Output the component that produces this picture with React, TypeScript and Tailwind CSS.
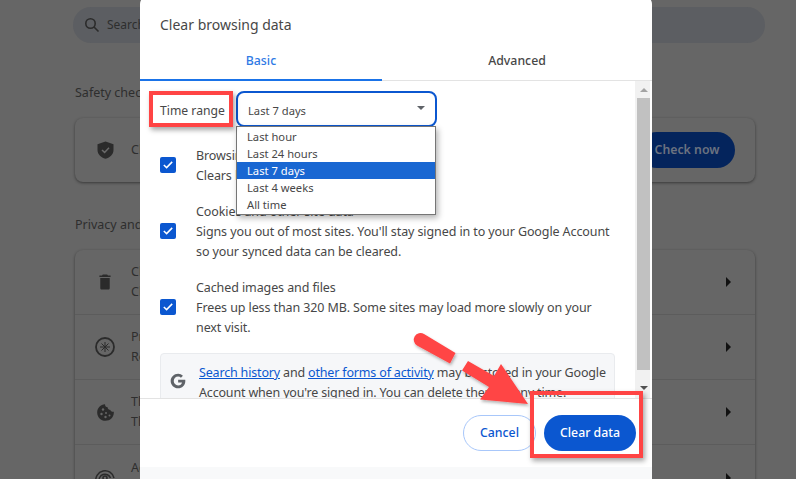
import React from "react";

const font = { fontFamily: '"Noto Sans", "Open Sans", sans-serif' };

function Shield() {
  return (
    <svg width="17" height="18" viewBox="0 0 17 18">
      <path d="M8.5 0.5 L16.5 3.2 V9 C16.5 13.2 13.2 16.4 8.5 17.8 C3.8 16.4 0.5 13.2 0.5 9 V3.2 Z" fill="#2b2b2b" />
      <path d="M5 9 L7.6 11.4 L12 6.8" fill="none" stroke="#6a6a6a" strokeWidth="1.5" />
    </svg>
  );
}
function Trash() {
  return (
    <svg width="12" height="16" viewBox="0 0 14 16" preserveAspectRatio="none">
      <path d="M4.5 0.5 H9.5 L10.5 1.5 H13.5 V3 H0.5 V1.5 H3.5 Z M1.5 4 H12.5 V14 C12.5 15 11.7 15.5 11 15.5 H3 C2.2 15.5 1.5 15 1.5 14 Z" fill="#2b2b2b" />
    </svg>
  );
}
function Aperture() {
  return (
    <svg width="20" height="20" viewBox="0 0 20 20" fill="none" stroke="#2b2b2b">
      <circle cx="10" cy="10" r="9" strokeWidth="1.8" />
      <path d="M10 5 V15 M5 10 H15 M6.5 6.5 L13.5 13.5 M13.5 6.5 L6.5 13.5" strokeWidth="1" />
    </svg>
  );
}
function Cookie() {
  return (
    <svg width="17" height="17" viewBox="0 0 17 17">
      <path d="M8 0.3 C8 2.2 9 3.2 10.6 3.3 C10.8 5 11.9 6 13.4 6 C13.6 7.3 14.9 8 16.8 7.8 C17.2 12.8 13.4 16.8 8.5 16.8 C3.8 16.8 0.2 13.2 0.2 8.5 C0.2 4 3.6 0.4 8 0.3 Z" fill="#2b2b2b" />
      <circle cx="6" cy="5.5" r="1.2" fill="#666" />
      <circle cx="4.5" cy="10" r="1.2" fill="#666" />
      <circle cx="9" cy="9" r="1" fill="#666" />
      <circle cx="8.5" cy="13" r="1.2" fill="#666" />
      <circle cx="12.5" cy="11.5" r="1" fill="#666" />
    </svg>
  );
}
function Spiral() {
  return (
    <svg width="20" height="20" viewBox="0 0 20 20" fill="none" stroke="#2b2b2b" strokeWidth="1.5">
      <path d="M1 14 A9 9 0 1 1 19 10" />
      <path d="M4.5 14 A5.5 5.5 0 1 1 15.5 10" />
      <circle cx="10" cy="10" r="2" />
    </svg>
  );
}

function Row({ icon, a, b, last }: { icon: React.ReactNode; a: string; b: string; last?: boolean }) {
  return (
    <div className={`flex h-[65px] items-center ${last ? "" : "border-b border-[#5c5c5c]"}`}>
      <div className="flex w-[56px] justify-center pl-[4px]">{icon}</div>
      <div className="flex-1 text-[12.5px] leading-[20px] text-[#2e2e2e]">
        <div>{a}</div>
        <div>{b}</div>
      </div>
      <div className="mr-[24px] h-0 w-0 border-y-[5px] border-l-[5px] border-y-transparent border-l-[#111]" />
    </div>
  );
}

function Check() {
  return (
    <div className="-mt-[2px] flex h-4 w-4 shrink-0 items-center justify-center rounded-[2px] bg-[#0b57d0]">
      <svg width="10" height="8" viewBox="0 0 10 8" fill="none" stroke="#fff" strokeWidth="1.5">
        <path d="M0.8 4 L3.6 6.6 L9.2 0.9" />
      </svg>
    </div>
  );
}

function Item({ title, lines }: { title: string; lines: string[] }) {
  return (
    <div className="flex items-center">
      <Check />
      <div className="ml-[20px] whitespace-nowrap text-[12.5px] leading-[20px] tracking-[-0.1px] text-[#474747]">
        <div>{title}</div>
        {lines.map((l) => (
          <div key={l}>{l}</div>
        ))}
      </div>
    </div>
  );
}

export default function App() {
  return (
    <div className="relative h-[479px] w-[796px] overflow-hidden bg-[#666666]" style={font}>
      {/* page behind the dialog */}
      <div className="pl-[75px] pr-[41px] pt-[7px]">
        <div className="-ml-[2px] flex h-[36px] w-[692px] items-center rounded-full bg-[#5c5e62] pl-[11px] text-[12px] text-[#2e2e2e]">
          <svg width="16" height="16" viewBox="0 0 16 16" fill="none" stroke="#2b2b2b" strokeWidth="1.6">
            <circle cx="6.5" cy="6.5" r="4.7" />
            <path d="M10 10 L14.5 14.5" />
          </svg>
          <span className="ml-[7px]">Search settings</span>
        </div>
        <div className="mt-[40px] text-[12.5px] leading-[20px] text-[#2e2e2e]">Safety check</div>
        <div className="mt-[15px] flex h-[64px] items-center rounded-[8px] bg-[#666666] shadow-[0_1px_3px_rgba(0,0,0,0.45)]">
          <div className="flex w-[56px] justify-center pl-[4px]"><Shield /></div>
          <div className="flex-1 text-[12.5px] text-[#2e2e2e]">Chrome can help keep you safe</div>
          <div className="mr-[20px] flex h-[36px] w-[96px] items-center justify-center rounded-full bg-[#04245c] text-[12.3px] font-semibold text-[#6b7280]">
            Check now
          </div>
        </div>
        <div className="mt-[33px] text-[12.5px] leading-[20px] text-[#2e2e2e]">Privacy and security</div>
        <div className="mt-[15px] rounded-[8px] bg-[#666666] shadow-[0_1px_3px_rgba(0,0,0,0.45)]">
          <Row icon={<Trash />} a="Clear browsing data" b="Clear history, cookies, cache" />
          <Row icon={<Aperture />} a="Privacy Guide" b="Review key settings" />
          <Row icon={<Cookie />} a="Third-party cookies" b="Third-party cookies are blocked" />
          <Row icon={<Spiral />} a="Ad privacy" b="Customize the info" last />
        </div>
      </div>

      {/* dialog */}
      <div className="absolute left-[140px] top-[-4px] flex h-[500px] w-[512px] flex-col overflow-hidden rounded-[8px] bg-white">
        <div className="h-[85px] shrink-0">
          <div className="pl-[20px] pt-[18px] text-[14px] leading-[22px] text-[#474747]">Clear browsing data</div>
          <div className="mt-[8px] flex h-[37px] border-b border-[#e3e3e3] text-[12.3px] font-medium">
            <div className="-mb-px flex w-[242px] items-center justify-center border-b-2 border-[#1a73e8] text-[#2f7ae5]">Basic</div>
            <div className="flex w-[270px] items-center justify-center pb-[2px] text-[#474747]">Advanced</div>
          </div>
        </div>

        <div className="relative flex h-[318px] shrink-0 overflow-hidden border-b border-[#e3e3e3]">
          <div className="min-w-0 flex-1 pl-[20px] pt-[10px]">
            <div className="flex items-center">
              <div className="w-[76px] pt-[3px] text-[12.2px] leading-[20px] text-[#474747]">Time range</div>
              <div className="flex h-[36px] w-[201px] items-center justify-between rounded-[8px] border-2 border-[#0b57d0] pl-[10px] pr-[10px] pt-[4px] text-[11.2px] text-[#474747]">
                <span>Last 7 days</span>
                <div className="mb-[6px] h-0 w-0 border-x-[4px] border-t-[4px] border-x-transparent border-t-[#5f6368]" />
              </div>
            </div>
            <div className="mt-[19px] flex flex-col gap-[16px]">
              <Item title="Browsing history" lines={["Clears history from all signed-in devices"]} />
              <Item
                title="Cookies and other site data"
                lines={[
                  "Signs you out of most sites. You'll stay signed in to your Google Account",
                  "so your synced data can be cleared.",
                ]}
              />
              <Item
                title="Cached images and files"
                lines={[
                  "Frees up less than 320 MB. Some sites may load more slowly on your",
                  "next visit.",
                ]}
              />
            </div>
            <div className="mt-[15px] flex h-[70px] w-[455px] rounded-[4px] border border-[#e9ebee] bg-[#f6f7f9] pl-[9px] pt-[8px]">
              <svg className="mt-[11px]" width="16" height="16" viewBox="0 0 24 24" fill="#5f6368">
                <path d="M12.2 10.2 V14.2 H18 C17.4 17 15.2 18.6 12.2 18.6 C8.5 18.6 5.6 15.6 5.6 12 C5.6 8.4 8.5 5.4 12.2 5.4 C13.9 5.4 15.3 6 16.4 7 L19.4 4 C17.5 2.2 15 1 12.2 1 C6 1 1 6 1 12 C1 18 6 23 12.2 23 C18 23 23 18.8 23 12 C23 11.3 22.9 10.7 22.8 10.2 Z" />
              </svg>
              <div className="ml-[13px] whitespace-nowrap pt-[1px] text-[12.5px] leading-[20px] tracking-[-0.17px] text-[#474747]">
                <div>
                  <span className="text-[#0b57d0] underline">Search history</span> and{" "}
                  <span className="text-[#0b57d0] underline">other forms of activity</span> may be stored in your Google
                </div>
                <div>Account when you're signed in. You can delete them at any time.</div>
              </div>
            </div>
          </div>

          {/* scrollbar */}
          <div className="mr-[2px] flex w-[15px] shrink-0 flex-col items-center bg-[#f1f1f1] pl-[2px]">
            <div className="mt-[7px] h-0 w-0 border-x-[4px] border-b-[4px] border-x-transparent border-b-[#a3a3a3]" />
            <div className="mt-[6px] h-[272px] w-[13px] bg-[#c1c1c1]" />
            <div className="mt-[16px] h-0 w-0 border-x-[4px] border-t-[4px] border-x-transparent border-t-[#505050]" />
          </div>

          {/* open select list */}
          <div className="absolute left-[96px] top-[45px] flex w-[200px] flex-col border border-[#767676] bg-white py-px text-[11.2px] leading-[17px] text-[#474747] shadow-[2px_3px_6px_rgba(0,0,0,0.3)]">
            <div className="pl-[10px]">Last hour</div>
            <div className="pl-[10px]">Last 24 hours</div>
            <div className="bg-[#1967d2] pl-[10px] text-white">Last 7 days</div>
            <div className="pl-[10px]">Last 4 weeks</div>
            <div className="pl-[10px]">All time</div>
          </div>
        </div>

        <div className="flex h-[68px] shrink-0 items-center justify-end gap-[8px] pr-[16px] text-[12.3px] font-medium">
          <div className="flex h-[36px] w-[73px] items-center justify-center rounded-full border border-[#a8c7fa] text-[#0b57d0]">Cancel</div>
          <div className="flex h-[36px] w-[92px] items-center justify-center rounded-full bg-[#0b57d0] text-white">Clear data</div>
        </div>
        <div className="flex-1 bg-[#f8f9fa]" />
      </div>

      {/* red annotations */}
      <div className="absolute left-[149px] top-[91px] h-[36px] w-[84px] border-[4px] border-[#ff4444] shadow-[2px_3px_5px_rgba(0,0,0,0.35)]" />
      <div className="absolute left-[530px] top-[391px] h-[67px] w-[113px] border-[4px] border-[#ff4444] shadow-[2px_3px_5px_rgba(0,0,0,0.35)]" />
      <svg className="absolute left-0 top-0" width="796" height="479" viewBox="0 0 796 479" fill="#ff4444">
        <defs>
          <filter id="s" x="-20%" y="-20%" width="140%" height="140%">
            <feDropShadow dx="1" dy="2" stdDeviation="1.5" floodColor="#000" floodOpacity="0.3" />
          </filter>
        </defs>
        <g filter="url(#s)">
          <path d="M455.5 353 L450 363.5 L417 345.5 A6.5 6.5 0 0 1 424 334 Z" />
          <path d="M468 361 L462 370.5 L489 387 L480 399.5 L528 404 L501 364 L494 376 Z" />
        </g>
      </svg>
    </div>
  );
}
